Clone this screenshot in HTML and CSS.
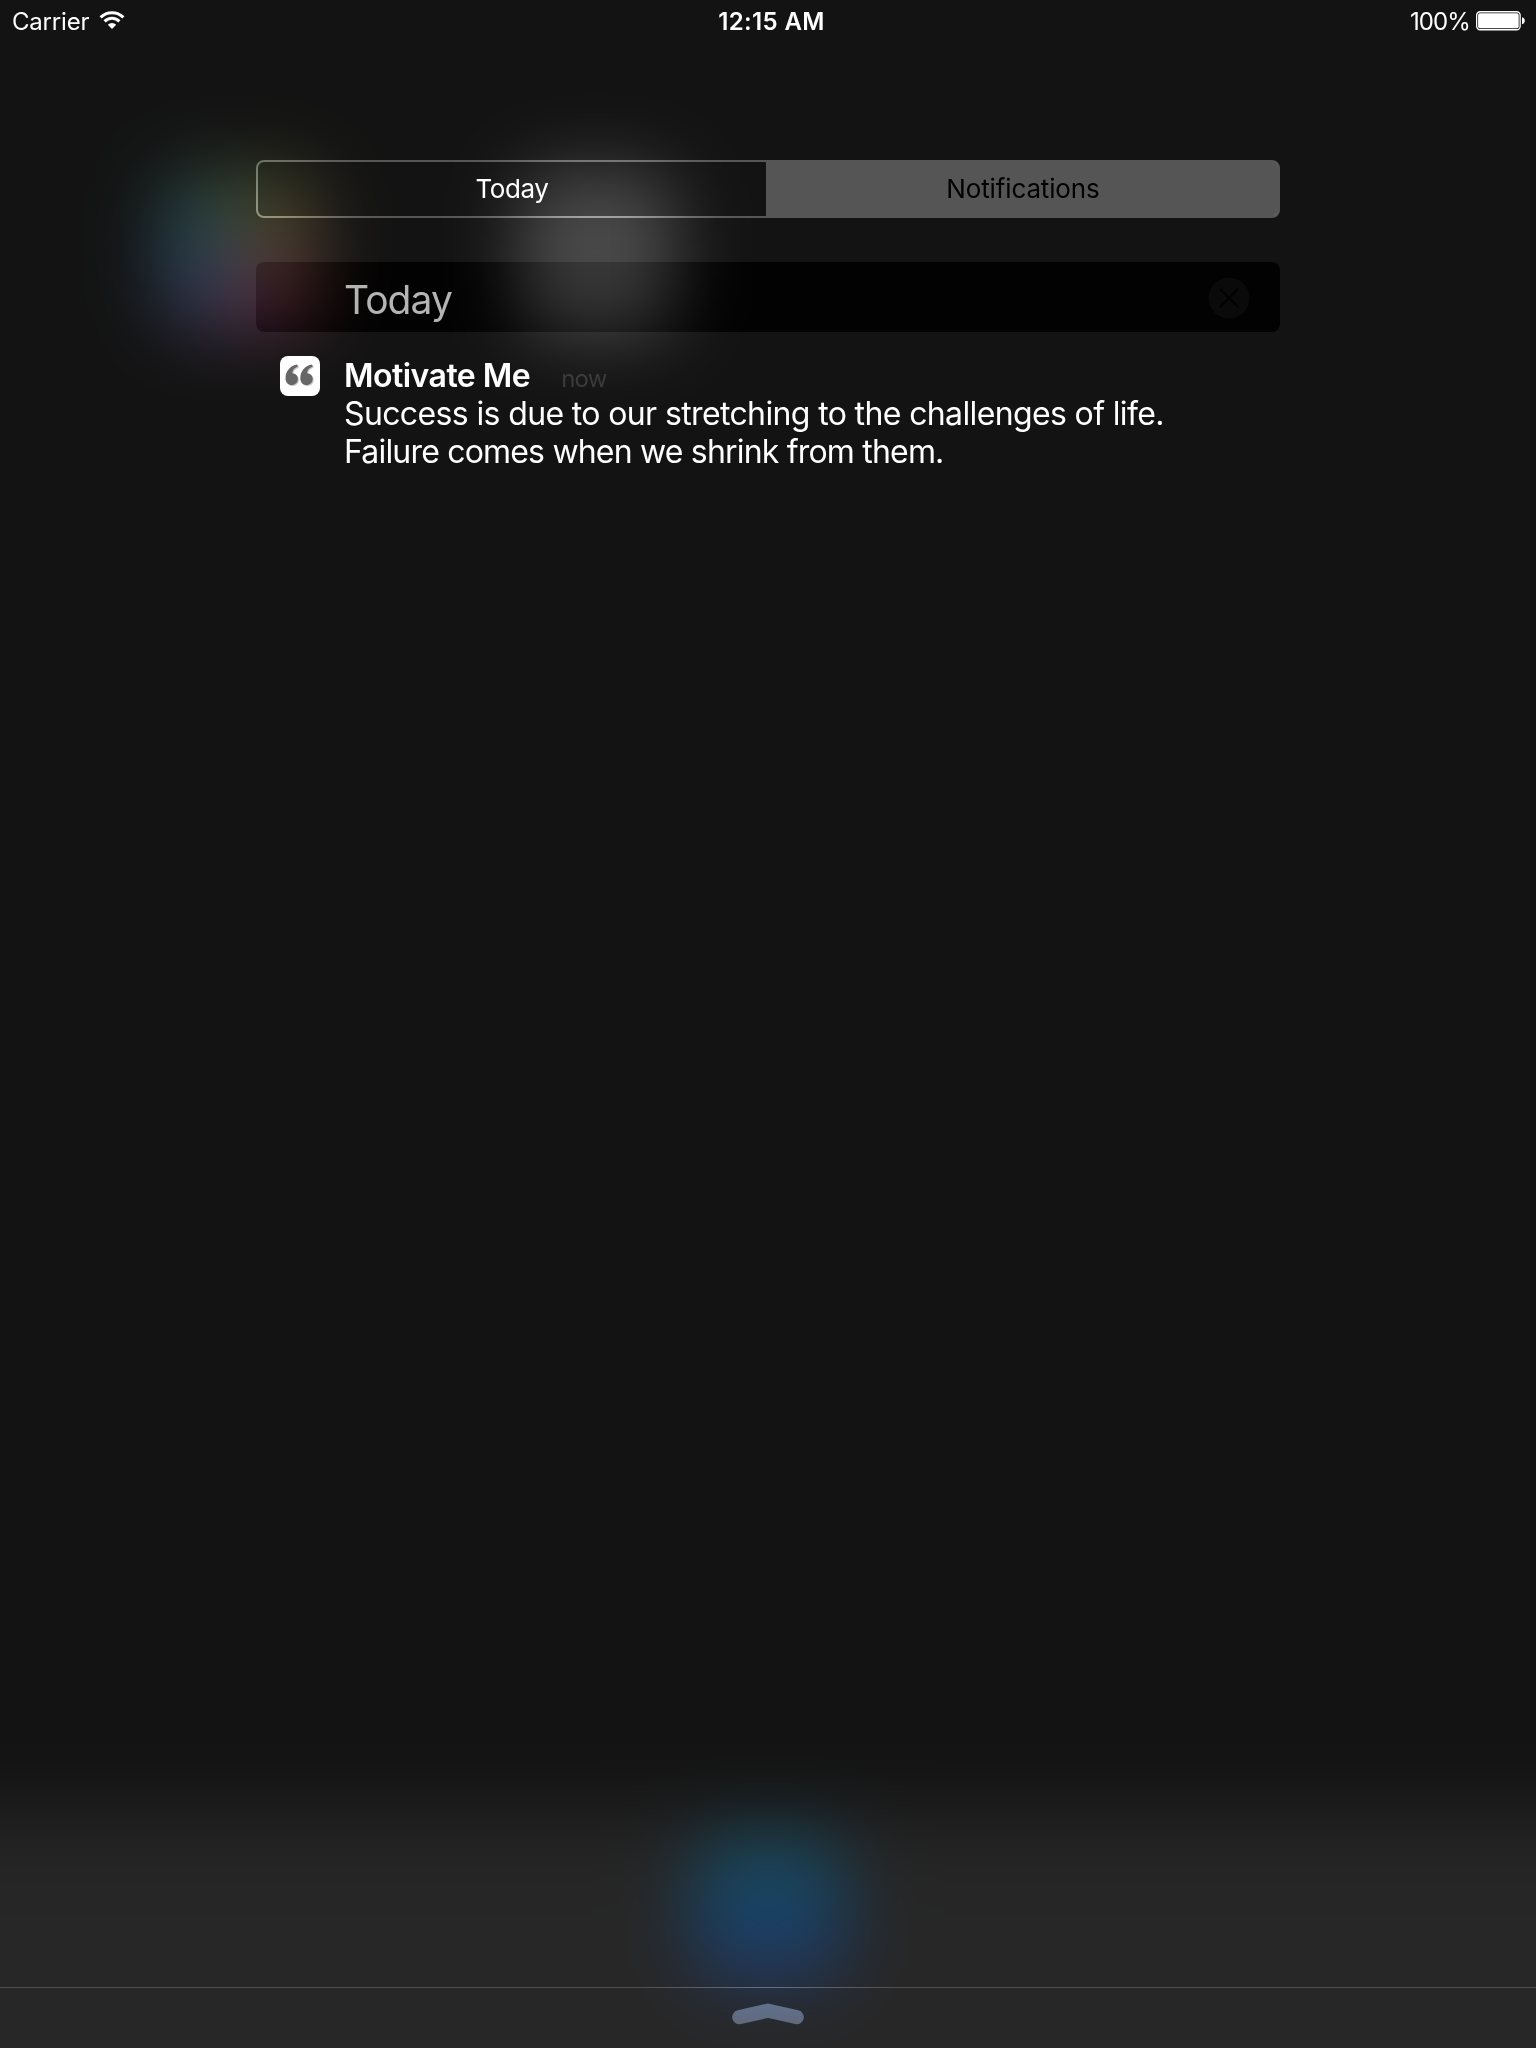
FILE: index.html
```html
<!DOCTYPE html>
<html lang="en">
<head>
<meta charset="utf-8">
<title>Notification Center</title>
<link rel="stylesheet" href="styles.css">
</head>
<body>
<div class="wallpaper">
  <div class="backdrop">
    <div class="dock"></div>
    <div class="glow photos"></div>
    <div class="glow gray"></div>
    <div class="glow mail"></div>
  </div>
</div>
<div class="screen">
  <header class="status">
    <div class="carrier"><span>Carrier</span>
      <svg class="wifi" width="26" height="20" viewBox="0 0 26 20"><g fill="none" stroke="#fff" stroke-width="3"><path d="M1.6 7.4a16 16 0 0 1 22.8 0"/><path d="M5.6 11.4a10.4 10.4 0 0 1 14.8 0"/></g><path fill="#fff" d="M13 19l-4.2-4.3a6 6 0 0 1 8.4 0z"/></svg>
    </div>
    <div class="clock">12:15 AM</div>
    <div class="power"><span>100%</span>
      <svg width="49" height="20" viewBox="0 0 49 20"><rect x=".65" y=".75" width="43.5" height="18" rx="3.5" fill="none" stroke="#fff" stroke-width="1.3"/><rect x="2.1" y="2.2" width="40.6" height="15.1" rx="1.8" fill="#fff"/><path fill="#fff" d="M46 6.200q2.8.7 2.8 3.500t-2.8 3.500z"/></svg>
    </div>
  </header>
  <main class="panel">
    <nav class="tabs">
      <div class="tab"><span>Today</span></div>
      <div class="tab active"><span>Notifications</span></div>
    </nav>
    <section>
      <div class="section-head">
        <h1>Today</h1>
        <svg class="close" width="42" height="42" viewBox="0 0 42 42"><circle cx="21" cy="21" r="20.5" fill="#0a0a0a"/><path d="M12.5 12.5l17 17m0-17l-17 17" stroke="#020202" stroke-width="2.2" stroke-linecap="round"/></svg>
      </div>
      <article class="note">
        <svg class="app-icon" width="40" height="40" viewBox="0 0 40 40"><rect width="40" height="40" rx="8" fill="#fff"/><g fill="#c9c9c9" transform="translate(1 1)"><path id="q" d="M17.3 8.6C10.600 9.600 5.500 15 5.500 22.200C5.500 26.300 8.200 29 11.700 29C15.200 29 17.900 26.400 17.900 23C17.900 19.700 15.500 17.300 12.300 17.200C12.500 13.800 14.500 11.700 17.900 10.400Z"/><use href="#q" x="14.800"/></g><g fill="#666"><use href="#q"/><use href="#q" x="14.800"/></g></svg>
        <div class="note-body">
          <div class="note-title"><h2>Motivate Me</h2><time>now</time></div>
          <p><span class="line1">Success is due to our stretching to the challenges of life.</span><br><span class="line2">Failure comes when we shrink from them.</span></p>
        </div>
      </article>
    </section>
  </main>
  <footer class="grabber">
    <svg width="72" height="22" viewBox="0 0 72 22"><defs><linearGradient id="g" gradientUnits="userSpaceOnUse" x1="0" y1="0" x2="0" y2="22"><stop offset="0" stop-color="#5f7090"/><stop offset="1" stop-color="#616978"/></linearGradient></defs><path d="M7.300 14.200L36 7.700L64.700 14.200" fill="none" stroke="url(#g)" stroke-width="14.200" stroke-linecap="round"/></svg>
  </footer>
</div>
</body>
</html>
```
FILE: styles.css
```css
* { box-sizing: border-box; }
body {
  margin: 0;
  background: #131313;
  color: #fff;
  font-family: Inter, "Liberation Sans", sans-serif;
}
h1, h2, p { margin: 0; font-weight: 400; }
svg { display: block; flex: none; }
.wallpaper {
  position: absolute;
  inset: 0;
  width: 1536px;
  height: 2048px;
  overflow: hidden;
  background: #131313;
}
/* Oversized so the blur never fades out at the screen edges */
.backdrop {
  position: absolute;
  inset: -200px;
  background: #131313;
  filter: blur(36px);
}
.dock {
  position: absolute;
  inset: 2008px 0 0;
  background: linear-gradient(#232323, #272727 100px);
}
.glow { position: absolute; width: 152px; height: 152px; border-radius: 34px; }
.photos {
  left: 360px;
  top: 371px;
  width: 158px;
  height: 160px;
  background: conic-gradient(from 0deg, #3c462a, #464428 45deg, #523e2e 90deg, #5c2e38 135deg, #4a3250 190deg, #303854 225deg, #24465a 270deg, #264646 315deg, #3c462a);
}
.gray {
  left: 719px;
  top: 370px;
  width: 156px;
  height: 166px;
  background: #494949;
}
.mail {
  left: 892px;
  top: 2033px;
  background: linear-gradient(#1c4854, #174764 40%, #173d6a 62%, #2a385c);
}
.screen {
  position: relative;
  width: 1536px;
  height: 2048px;
  display: flex;
  flex-direction: column;
}
.status {
  height: 42px;
  padding: 0 11px 0 12px;
  display: grid;
  grid-template-columns: 1fr auto 1fr;
  align-items: center;
  font-size: 24px;
  line-height: 41px;
}
.carrier { display: flex; align-items: center; gap: 10px; letter-spacing: -.2px; }
.wifi { margin-top: -2px; }
.clock { font-weight: 600; padding-left: 6px; letter-spacing: .35px; }
.power { display: flex; align-items: center; justify-content: flex-end; gap: 6px; letter-spacing: -.9px; }
.power svg { margin-top: -1px; }
.panel { width: 1024px; margin: 118px auto 0; flex: 1; }
.tabs { position: relative; display: grid; grid-template-columns: 512px 512px; height: 58px; }
.tabs::before, .tabs::after {
  content: "";
  position: absolute;
  inset: 0;
  border: 2px solid;
  border-radius: 8px;
}
.tabs::before { border-color: #606060; mix-blend-mode: color-dodge; }
.tabs::after { border-color: #373737; mix-blend-mode: plus-lighter; }
.tab {
  display: flex;
  align-items: center;
  justify-content: center;
  font-size: 26px;
  line-height: 30px;
  padding-bottom: 1px;
  letter-spacing: -.4px;
}
.tab.active {
  margin: 2px 2px 2px -2px;
  padding-left: 2px;
  border-radius: 0 6px 6px 0;
  background: #555;
  color: #000;
  letter-spacing: -.14px;
}
.section-head {
  position: relative;
  display: flex;
  align-items: center;
  justify-content: space-between;
  height: 70px;
  margin-top: 44px;
  padding: 2px 30px 0 88px;
}
.section-head::before {
  content: "";
  position: absolute;
  inset: 0;
  border-radius: 8px;
  background: #111;
  mix-blend-mode: difference;
}
h1 { position: relative; font-size: 39px; line-height: 48px; padding-top: 4px; color: #b4b4b4; letter-spacing: -.95px; }
.close { position: relative; }
.note { display: flex; gap: 24px; padding: 24px 0 0 24px; }
.note-body { margin-top: 1px; }
.note-title { display: flex; align-items: baseline; gap: 31px; height: 38px; }
h2 { font-size: 32px; font-weight: 600; line-height: 38px; letter-spacing: -.53px; }
time { font-size: 24px; color: #3b3b3b; letter-spacing: -.8px; }
p { font-size: 32px; line-height: 38px; white-space: nowrap; }
.line1 { letter-spacing: -.63px; }
.line2 { letter-spacing: -.81px; }
.grabber {
  height: 61px;
  padding-top: 15px;
  display: flex;
  justify-content: center;
  align-items: flex-start;
  border-top: 1px solid;
  border-image: linear-gradient(90deg, #505050 640px, #54749e 768px, #505050 896px) 1;
}
```
